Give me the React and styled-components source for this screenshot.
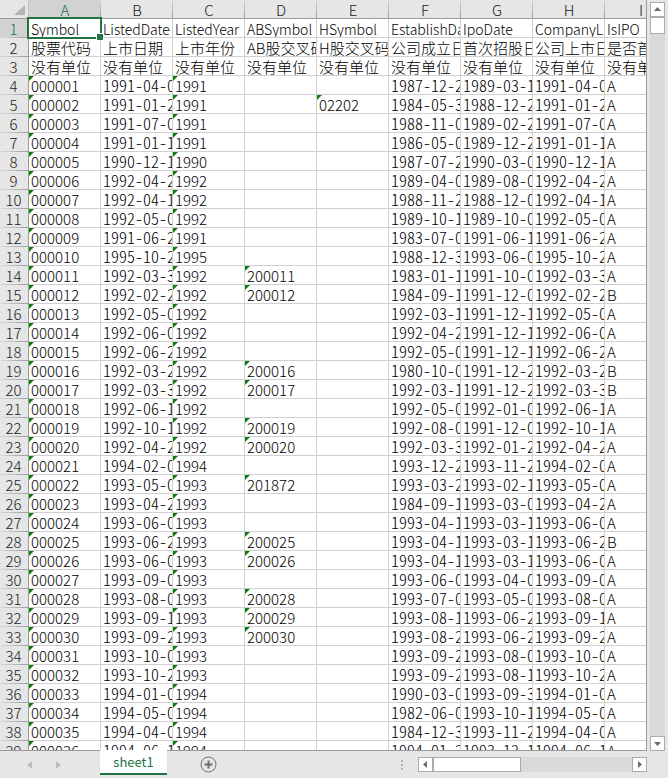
import { useState } from "react";
import styled, { createGlobalStyle } from "styled-components";

const columns = ["A", "B", "C", "D", "E", "F", "G", "H", "I"];

// 前三行：字段名、中文名、单位
const headRows = [
  ["Symbol", "ListedDate", "ListedYear", "ABSymbol", "HSymbol", "EstablishDa", "IpoDate", "CompanyL", "IsIPO"],
  ["股票代码", "上市日期", "上市年份", "AB股交叉码", "H股交叉码", "公司成立日", "首次招股日", "公司上市日", "是否首"],
  ["没有单位", "没有单位", "没有单位", "没有单位", "没有单位", "没有单位", "没有单位", "没有单位", "没有单"],
];

const stockRows = [
  ["000001", "1991-04-0", "1991", "", "", "1987-12-2", "1989-03-1", "1991-04-0", "A"],
  ["000002", "1991-01-2", "1991", "", "02202", "1984-05-3", "1988-12-2", "1991-01-2", "A"],
  ["000003", "1991-07-0", "1991", "", "", "1988-11-0", "1989-02-2", "1991-07-0", "A"],
  ["000004", "1991-01-1", "1991", "", "", "1986-05-0", "1989-12-2", "1991-01-1", "A"],
  ["000005", "1990-12-1", "1990", "", "", "1987-07-2", "1990-03-0", "1990-12-1", "A"],
  ["000006", "1992-04-2", "1992", "", "", "1989-04-0", "1989-08-0", "1992-04-2", "A"],
  ["000007", "1992-04-1", "1992", "", "", "1988-11-2", "1988-12-0", "1992-04-1", "A"],
  ["000008", "1992-05-0", "1992", "", "", "1989-10-1", "1989-10-0", "1992-05-0", "A"],
  ["000009", "1991-06-2", "1991", "", "", "1983-07-0", "1991-06-1", "1991-06-2", "A"],
  ["000010", "1995-10-2", "1995", "", "", "1988-12-3", "1993-06-0", "1995-10-2", "A"],
  ["000011", "1992-03-3", "1992", "200011", "", "1983-01-1", "1991-10-0", "1992-03-3", "A"],
  ["000012", "1992-02-2", "1992", "200012", "", "1984-09-1", "1991-12-0", "1992-02-2", "B"],
  ["000013", "1992-05-0", "1992", "", "", "1992-03-1", "1991-12-1", "1992-05-0", "A"],
  ["000014", "1992-06-0", "1992", "", "", "1992-04-2", "1991-12-1", "1992-06-0", "A"],
  ["000015", "1992-06-2", "1992", "", "", "1992-05-0", "1991-12-1", "1992-06-2", "A"],
  ["000016", "1992-03-2", "1992", "200016", "", "1980-10-0", "1991-12-2", "1992-03-2", "B"],
  ["000017", "1992-03-3", "1992", "200017", "", "1992-03-1", "1991-12-2", "1992-03-3", "B"],
  ["000018", "1992-06-1", "1992", "", "", "1992-05-0", "1992-01-0", "1992-06-1", "A"],
  ["000019", "1992-10-1", "1992", "200019", "", "1992-08-0", "1991-12-0", "1992-10-1", "A"],
  ["000020", "1992-04-2", "1992", "200020", "", "1992-03-3", "1992-01-2", "1992-04-2", "A"],
  ["000021", "1994-02-0", "1994", "", "", "1993-12-2", "1993-11-2", "1994-02-0", "A"],
  ["000022", "1993-05-0", "1993", "201872", "", "1993-03-2", "1993-02-1", "1993-05-0", "A"],
  ["000023", "1993-04-2", "1993", "", "", "1984-09-1", "1993-03-0", "1993-04-2", "A"],
  ["000024", "1993-06-0", "1993", "", "", "1993-04-1", "1993-03-1", "1993-06-0", "A"],
  ["000025", "1993-06-2", "1993", "200025", "", "1993-04-1", "1993-03-1", "1993-06-2", "B"],
  ["000026", "1993-06-0", "1993", "200026", "", "1993-04-1", "1993-03-1", "1993-06-0", "A"],
  ["000027", "1993-09-0", "1993", "", "", "1993-06-0", "1993-04-0", "1993-09-0", "A"],
  ["000028", "1993-08-0", "1993", "200028", "", "1993-07-0", "1993-05-0", "1993-08-0", "A"],
  ["000029", "1993-09-1", "1993", "200029", "", "1993-08-1", "1993-06-2", "1993-09-1", "A"],
  ["000030", "1993-09-2", "1993", "200030", "", "1993-08-2", "1993-06-2", "1993-09-2", "A"],
  ["000031", "1993-10-0", "1993", "", "", "1993-09-2", "1993-08-0", "1993-10-0", "A"],
  ["000032", "1993-10-2", "1993", "", "", "1993-09-2", "1993-08-1", "1993-10-2", "A"],
  ["000033", "1994-01-0", "1994", "", "", "1990-03-0", "1993-09-3", "1994-01-0", "A"],
  ["000034", "1994-05-0", "1994", "", "", "1982-06-0", "1993-10-1", "1994-05-0", "A"],
  ["000035", "1994-04-0", "1994", "", "", "1984-12-3", "1993-11-2", "1994-04-0", "A"],
  ["000036", "1994-06-1", "1994", "", "", "1994-01-2", "1993-12-1", "1994-06-1", "A"],
];

const rows = [...headRows, ...stockRows];

// 以文本形式存储的数字，左上角显示绿色三角
const isTextNumber = (value) => /^\d+$/.test(value);
const isDate = (value) => /^\d{4}-/.test(value);

const App = () => {
  const [selected, setSelected] = useState({ row: 0, col: 0 });

  return (
    <>
      <GlobalStyle />
      <Workbook>
        <SheetArea>
          <GridView>
            <Grid>
              <colgroup>
                <RowNumberCol />
                {columns.map((name) => (
                  <DataCol key={name} />
                ))}
              </colgroup>
              <thead>
                <tr>
                  <Corner aria-label="全选">
                    <svg width="28" height="18" viewBox="0 0 28 18">
                      <path d="M25 5V15H14Z" fill="#b4b4b4" />
                    </svg>
                  </Corner>
                  {columns.map((name, col) => (
                    <ColumnHead key={name} scope="col" $active={col === selected.col}>
                      {name}
                    </ColumnHead>
                  ))}
                </tr>
              </thead>
              <tbody>
                {rows.map((cells, row) => (
                  <tr key={row}>
                    <RowHead scope="row" $active={row === selected.row}>
                      {row + 1}
                    </RowHead>
                    {cells.map((value, col) => (
                      <Cell key={col} onClick={() => setSelected({ row, col })}>
                        {isTextNumber(value) && <ErrorMark />}
                        <CellText $date={isDate(value)} $small={row === 0}>
                          {value}
                        </CellText>
                        {row === selected.row && col === selected.col && <Selection />}
                      </Cell>
                    ))}
                  </tr>
                ))}
              </tbody>
            </Grid>
          </GridView>
          <VerticalScroll>
            <ScrollButton aria-label="向上滚动">
              <Arrow d="M3 8L6.5 4L10 8Z" />
            </ScrollButton>
            <VerticalThumb />
            <Track />
            <ScrollButton aria-label="向下滚动">
              <Arrow d="M3 5L6.5 9L10 5Z" />
            </ScrollButton>
          </VerticalScroll>
        </SheetArea>
        <BottomBar>
          <SheetNav>
            <NavButton aria-label="上一个工作表">
              <svg width="5" height="8" viewBox="0 0 5 8">
                <path d="M5 0V8L0 4Z" fill="#bdbdbd" />
              </svg>
            </NavButton>
            <NavButton aria-label="下一个工作表">
              <svg width="5" height="8" viewBox="0 0 5 8">
                <path d="M0 0V8L5 4Z" fill="#bdbdbd" />
              </svg>
            </NavButton>
          </SheetNav>
          <SheetTab>sheet1</SheetTab>
          <AddButton aria-label="新工作表">
            <svg width="17" height="17" viewBox="0 0 17 17" fill="none" stroke="#6e6e6e">
              <circle cx="8.5" cy="8.5" r="7.5" />
              <path d="M8.5 4.5V12.5M4.5 8.5H12.5" strokeWidth="2" />
            </svg>
          </AddButton>
          <Splitter>
            <i />
            <i />
            <i />
          </Splitter>
          <HorizontalScroll>
            <ScrollButton aria-label="向左滚动">
              <Arrow d="M8 3V10L4 6.5Z" />
            </ScrollButton>
            <HorizontalThumb />
            <Track />
            <ScrollButton aria-label="向右滚动">
              <Arrow d="M5 3V10L9 6.5Z" />
            </ScrollButton>
          </HorizontalScroll>
        </BottomBar>
      </Workbook>
    </>
  );
};

const Arrow = ({ d }) => (
  <svg width="13" height="13" viewBox="0 0 13 13">
    <path d={d} fill="#6a6a6a" />
  </svg>
);

export default App;

const GlobalStyle = createGlobalStyle`
  * {
    box-sizing: border-box;
  }
  body {
    margin: 0;
    background: #e6e6e6;
    font-family: "Noto Sans CJK SC", sans-serif;
    font-size: 15px;
    font-weight: 300;
    color: #000;
  }
  button {
    margin: 0;
    padding: 0;
    border: none;
    background: none;
    font: inherit;
    cursor: pointer;
  }
  svg {
    display: block;
  }
`;

const Workbook = styled.main`
  display: flex;
  flex-direction: column;
  height: 100vh;
  overflow: hidden;
`;

const SheetArea = styled.section`
  flex: 1;
  display: flex;
  gap: 3px;
  min-height: 0;
  padding-right: 3px;
`;

const GridView = styled.div`
  flex: 1;
  min-width: 0;
  overflow: hidden;
  background: #fff;
  border-right: 1px solid #9b9b9b;
  border-bottom: 1px solid #9b9b9b;
`;

const Grid = styled.table`
  width: 677px;
  table-layout: fixed;
  border-collapse: separate;
  border-spacing: 0;
`;

const RowNumberCol = styled.col`
  width: 29px;
`;

const DataCol = styled.col`
  width: 72px;
`;

const Corner = styled.th`
  height: 19px;
  padding: 0;
  background: #e6e6e6;
  border-right: 1px solid #c4c4c4;
  border-bottom: 1px solid #9b9b9b;
`;

const ColumnHead = styled.th`
  height: 19px;
  padding: 2px 0 0;
  font-weight: 300;
  line-height: 16px;
  color: ${({ $active }) => ($active ? "#217346" : "#222")};
  background: linear-gradient(#d6d6d6, #9b9b9b) right / 1px 100% no-repeat
    ${({ $active }) => ($active ? "#d2d2d2" : "#e6e6e6")};
  border-bottom: 1px solid #9b9b9b;
`;

const RowHead = styled.th`
  height: 19px;
  padding: 1px 1px 0 0;
  font-weight: 300;
  line-height: 18px;
  color: ${({ $active }) => ($active ? "#217346" : "#222")};
  background: linear-gradient(90deg, #dadada, #9b9b9b) bottom / 100% 1px no-repeat
    ${({ $active }) => ($active ? "#d2d2d2" : "#e6e6e6")};
  border-right: 1px solid #9b9b9b;
`;

const Cell = styled.td`
  position: relative;
  height: 19px;
  padding: 0;
  border-right: 1px solid #d0d0d0;
  border-bottom: 1px solid #d0d0d0;
`;

const CellText = styled.div`
  height: 18px;
  padding: 1px 0 0 2px;
  font-size: ${({ $date, $small }) => ($date ? "16px" : $small ? "14px" : "15px")};
  line-height: ${({ $date }) => ($date ? "16px" : "18px")};
  white-space: nowrap;
  overflow: hidden;
  /* 日期按半角等宽显示 */
  font-feature-settings: ${({ $date }) => ($date ? '"hwid"' : "normal")};
`;

const ErrorMark = styled.span`
  position: absolute;
  top: 0;
  left: 0;
  border-top: 5px solid #0a7d0a;
  border-right: 5px solid transparent;
`;

const Selection = styled.div`
  position: absolute;
  inset: -2px;
  border: 2px solid #217346;
  pointer-events: none;
  z-index: 1;

  &::after {
    content: "";
    position: absolute;
    right: -3px;
    bottom: -3px;
    width: 6px;
    height: 6px;
    background: #217346;
    border-top: 1px solid #fff;
    border-left: 1px solid #fff;
  }
`;

const VerticalScroll = styled.div`
  display: flex;
  flex-direction: column;
  width: 15px;
  padding-top: 2px;
`;

const ScrollButton = styled.button`
  display: flex;
  flex: none;
  align-items: center;
  justify-content: center;
  width: 15px;
  height: 15px;
  && {
    background: #fff;
    border: 1px solid #ababab;
  }
`;

const VerticalThumb = styled.div`
  height: 17px;
  background: #fff;
  border: 1px solid #ababab;
`;

const Track = styled.div`
  flex: 1;
  background: #dadada;
`;

const BottomBar = styled.footer`
  display: flex;
  height: 27px;
  padding-right: 21px;
`;

const SheetNav = styled.nav`
  display: flex;
  align-items: center;
  gap: 24px;
  width: 100px;
  padding-left: 27px;
`;

const NavButton = styled.button`
  width: 5px;
  height: 8px;
`;

const SheetTab = styled.button`
  width: 67px;
  height: 25px;
  margin-top: -1px;
  && {
    font-size: 13px;
    font-weight: 400;
    line-height: 22px;
    color: #217346;
    background: #fff;
    border-bottom: 2px solid #217346;
  }
`;

const AddButton = styled.button`
  width: 17px;
  margin-left: 33px;
`;

const Splitter = styled.div`
  display: flex;
  flex-direction: column;
  justify-content: center;
  gap: 2px;
  margin-left: auto;
  margin-right: 15px;
  & i {
    width: 2px;
    height: 2px;
    background: #b0b0b0;
  }
`;

const HorizontalScroll = styled.div`
  display: flex;
  align-self: center;
  width: 36%;
  max-width: 229px;
`;

const HorizontalThumb = styled.div`
  width: 88px;
  background: #fff;
  border: 1px solid #ababab;
`;
